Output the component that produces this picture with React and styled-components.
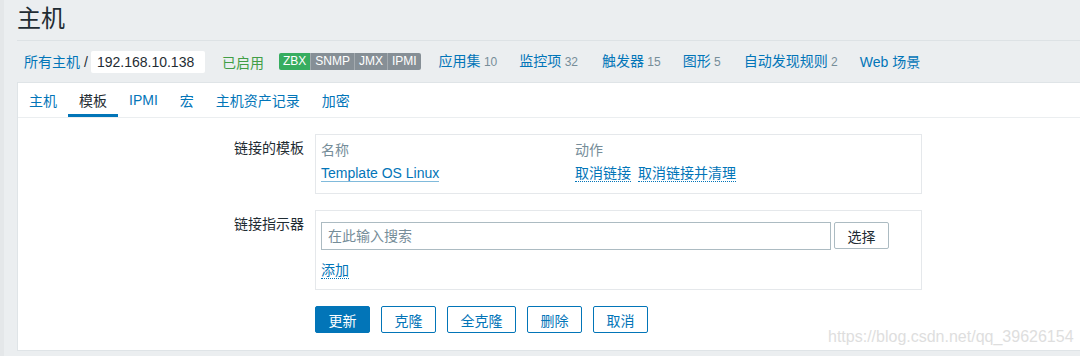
import React from "react";
import styled, { createGlobalStyle } from "styled-components";

const FONT = `"Liberation Sans", Arial, "Noto Sans CJK SC", sans-serif`;

const GlobalStyle = createGlobalStyle`
  html, body {
    margin: 0;
    padding: 0;
    background: #ebeef0;
    overflow: hidden;
  }
  body {
    font-family: ${FONT};
    font-size: 14px;
    color: #1f2c33;
  }
  * { box-sizing: border-box; }
`;

const Page = styled.div`
  position: relative;
  width: 1080px;
  height: 356px;
  border-left: 4px solid #e4e7e9;
  padding-left: 13px;
  overflow: hidden;
`;

const Header = styled.header`
  height: 41px;
  display: flex;
  align-items: center;
  border-bottom: 1px solid #dde2e5;
  margin-right: -2px;
`;

const Title = styled.h1`
  margin: 0;
  font-size: 24px;
  font-weight: normal;
  line-height: 28px;
  color: #1f2c33;
  position: relative;
  top: -1px;
`;

const NavRow = styled.nav`
  height: 41px;
  display: flex;
  align-items: center;
  padding-left: 7px;
`;

const Link = styled.a`
  color: #0275b8;
  text-decoration: none;
  font-size: 14px;
  line-height: 16px;
  white-space: nowrap;
  margin-left: ${(p) => p.$ml || 0}px;
`;

const Count = styled.span`
  color: #768d99;
  font-size: 12px;
`;

const Slash = styled.span`
  margin: 0 3px 0 4px;
  color: #1f2c33;
`;

const HostBox = styled.span`
  display: inline-flex;
  align-items: center;
  width: 114px;
  height: 22px;
  padding: 0 6px;
  background: #fff;
  border-radius: 2px;
  color: #1f2c33;
  font-size: 14px;
`;

const Enabled = styled.span`
  margin-left: 17px;
  color: #429e47;
  font-size: 14px;
`;

const Tags = styled.span`
  display: inline-flex;
  margin-left: 15px;
  border-radius: 2px;
  overflow: hidden;
  height: 17px;
`;

const Tag = styled.span`
  padding: 0 4px;
  font-size: 12px;
  line-height: 17px;
  color: #fff;
  background: ${(p) => (p.$on ? "#37ad60" : "#868f96")};
  & + & {
    border-left: 1px solid rgba(255, 255, 255, 0.25);
  }
`;

const Card = styled.section`
  background: #fff;
  border: 1px solid #dfe4e7;
  margin-right: -2px;
  height: 269px;
`;

const TabBar = styled.ul`
  display: flex;
  margin: 0;
  padding: 0;
  list-style: none;
  border-bottom: 1px solid #ebeef0;
`;

const Tab = styled.li`
  height: 34px;
  padding: 2px 11px 0;
  display: flex;
  align-items: center;
  font-size: 14px;
  color: ${(p) => (p.$active ? "#1f2c33" : "#0275b8")};
  border-bottom: 3px solid ${(p) => (p.$active ? "#0275b8" : "transparent")};
`;

const Form = styled.div`
  display: grid;
  grid-template-columns: 286px 607px;
  column-gap: 11px;
  row-gap: 16px;
  padding: 16px 0 17px;
`;

const Label = styled.div`
  text-align: right;
  padding-top: 6px;
  line-height: 16px;
  font-size: 14px;
  color: #1f2c33;
`;

const Box = styled.div`
  border: 1px solid #e5e8eb;
  padding: ${(p) => p.$pad};
`;

const LinkedTable = styled.div`
  display: grid;
  grid-template-columns: 254px 1fr;
`;

const HeadCell = styled.div`
  height: 22px;
  display: flex;
  align-items: center;
  color: #768d99;
  font-size: 14px;
`;

const Cell = styled.div`
  height: 26px;
  display: flex;
  align-items: center;
  gap: 7px;
`;

const UnderLink = styled.a`
  display: inline-block;
  color: #0275b8;
  text-decoration: none;
  font-size: 14px;
  line-height: 16px;
  border-bottom: 1px ${(p) => (p.$dotted ? "dotted #0275b8" : "solid rgba(2,117,184,0.5)")};
`;

const SearchRow = styled.div`
  display: flex;
  align-items: flex-start;
`;

const SearchInput = styled.input`
  width: 510px;
  height: 28px;
  border: 1px solid #acbbc2;
  border-radius: 0;
  padding: 0 6px;
  font-family: ${FONT};
  font-size: 14px;
  color: #1f2c33;
  outline: none;
  &::placeholder {
    color: #768d99;
  }
`;

const SelectButton = styled.button`
  margin-left: 3px;
  width: 55px;
  height: 27px;
  border: 1px solid #acbbc2;
  border-radius: 2px;
  background: #fff;
  color: #1f2c33;
  font-family: ${FONT};
  font-size: 14px;
  padding: 0;
`;

const AddWrap = styled.div`
  margin-top: 12px;
  display: flex;
`;

const Buttons = styled.div`
  grid-column: 2;
  display: flex;
  gap: 11px;
`;

const Button = styled.button`
  height: 27px;
  padding: 0 12.5px;
  border-radius: 2px;
  border: 1px solid #0275b8;
  background: ${(p) => (p.$primary ? "#0275b8" : "#fff")};
  color: ${(p) => (p.$primary ? "#fff" : "#0275b8")};
  font-family: ${FONT};
  font-size: 14px;
`;

const Watermark = styled.div`
  position: absolute;
  left: 824px;
  top: 327px;
  font-family: "Liberation Sans", Arial, sans-serif;
  font-size: 16px;
  line-height: 19px;
  color: #dedede;
  white-space: nowrap;
`;

const navItems = [
  ["应用集", "10", 18],
  ["监控项", "32", 22],
  ["触发器", "15", 24],
  ["图形", "5", 22],
  ["自动发现规则", "2", 23],
  ["Web 场景", null, 22],
];

const tabs = ["主机", "模板", "IPMI", "宏", "主机资产记录", "加密"];

export default function App() {
  return (
    <>
      <GlobalStyle />
      <Page>
        <Header>
          <Title>主机</Title>
        </Header>
        <NavRow>
          <Link>所有主机</Link>
          <Slash>/</Slash>
          <HostBox>192.168.10.138</HostBox>
          <Enabled>已启用</Enabled>
          <Tags>
            <Tag $on>ZBX</Tag>
            <Tag>SNMP</Tag>
            <Tag>JMX</Tag>
            <Tag>IPMI</Tag>
          </Tags>
          {navItems.map(([name, count, ml]) => (
            <Link key={name} $ml={ml}>
              {name}
              {count && <Count> {count}</Count>}
            </Link>
          ))}
        </NavRow>
        <Card>
          <TabBar>
            {tabs.map((t) => (
              <Tab key={t} $active={t === "模板"}>
                {t}
              </Tab>
            ))}
          </TabBar>
          <Form>
            <Label>链接的模板</Label>
            <Box $pad="3px 5px 7px">
              <LinkedTable>
                <HeadCell>名称</HeadCell>
                <HeadCell>动作</HeadCell>
                <Cell>
                  <UnderLink>Template OS Linux</UnderLink>
                </Cell>
                <Cell>
                  <UnderLink $dotted>取消链接</UnderLink>
                  <UnderLink $dotted>取消链接并清理</UnderLink>
                </Cell>
              </LinkedTable>
            </Box>
            <Label>链接指示器</Label>
            <Box $pad="11px 5px 10px">
              <SearchRow>
                <SearchInput placeholder="在此输入搜索" readOnly />
                <SelectButton>选择</SelectButton>
              </SearchRow>
              <AddWrap>
                <UnderLink $dotted>添加</UnderLink>
              </AddWrap>
            </Box>
            <Buttons>
              <Button $primary>更新</Button>
              <Button>克隆</Button>
              <Button>全克隆</Button>
              <Button>删除</Button>
              <Button>取消</Button>
            </Buttons>
          </Form>
        </Card>
        <Watermark>https://blog.csdn.net/qq_39626154</Watermark>
      </Page>
    </>
  );
}
